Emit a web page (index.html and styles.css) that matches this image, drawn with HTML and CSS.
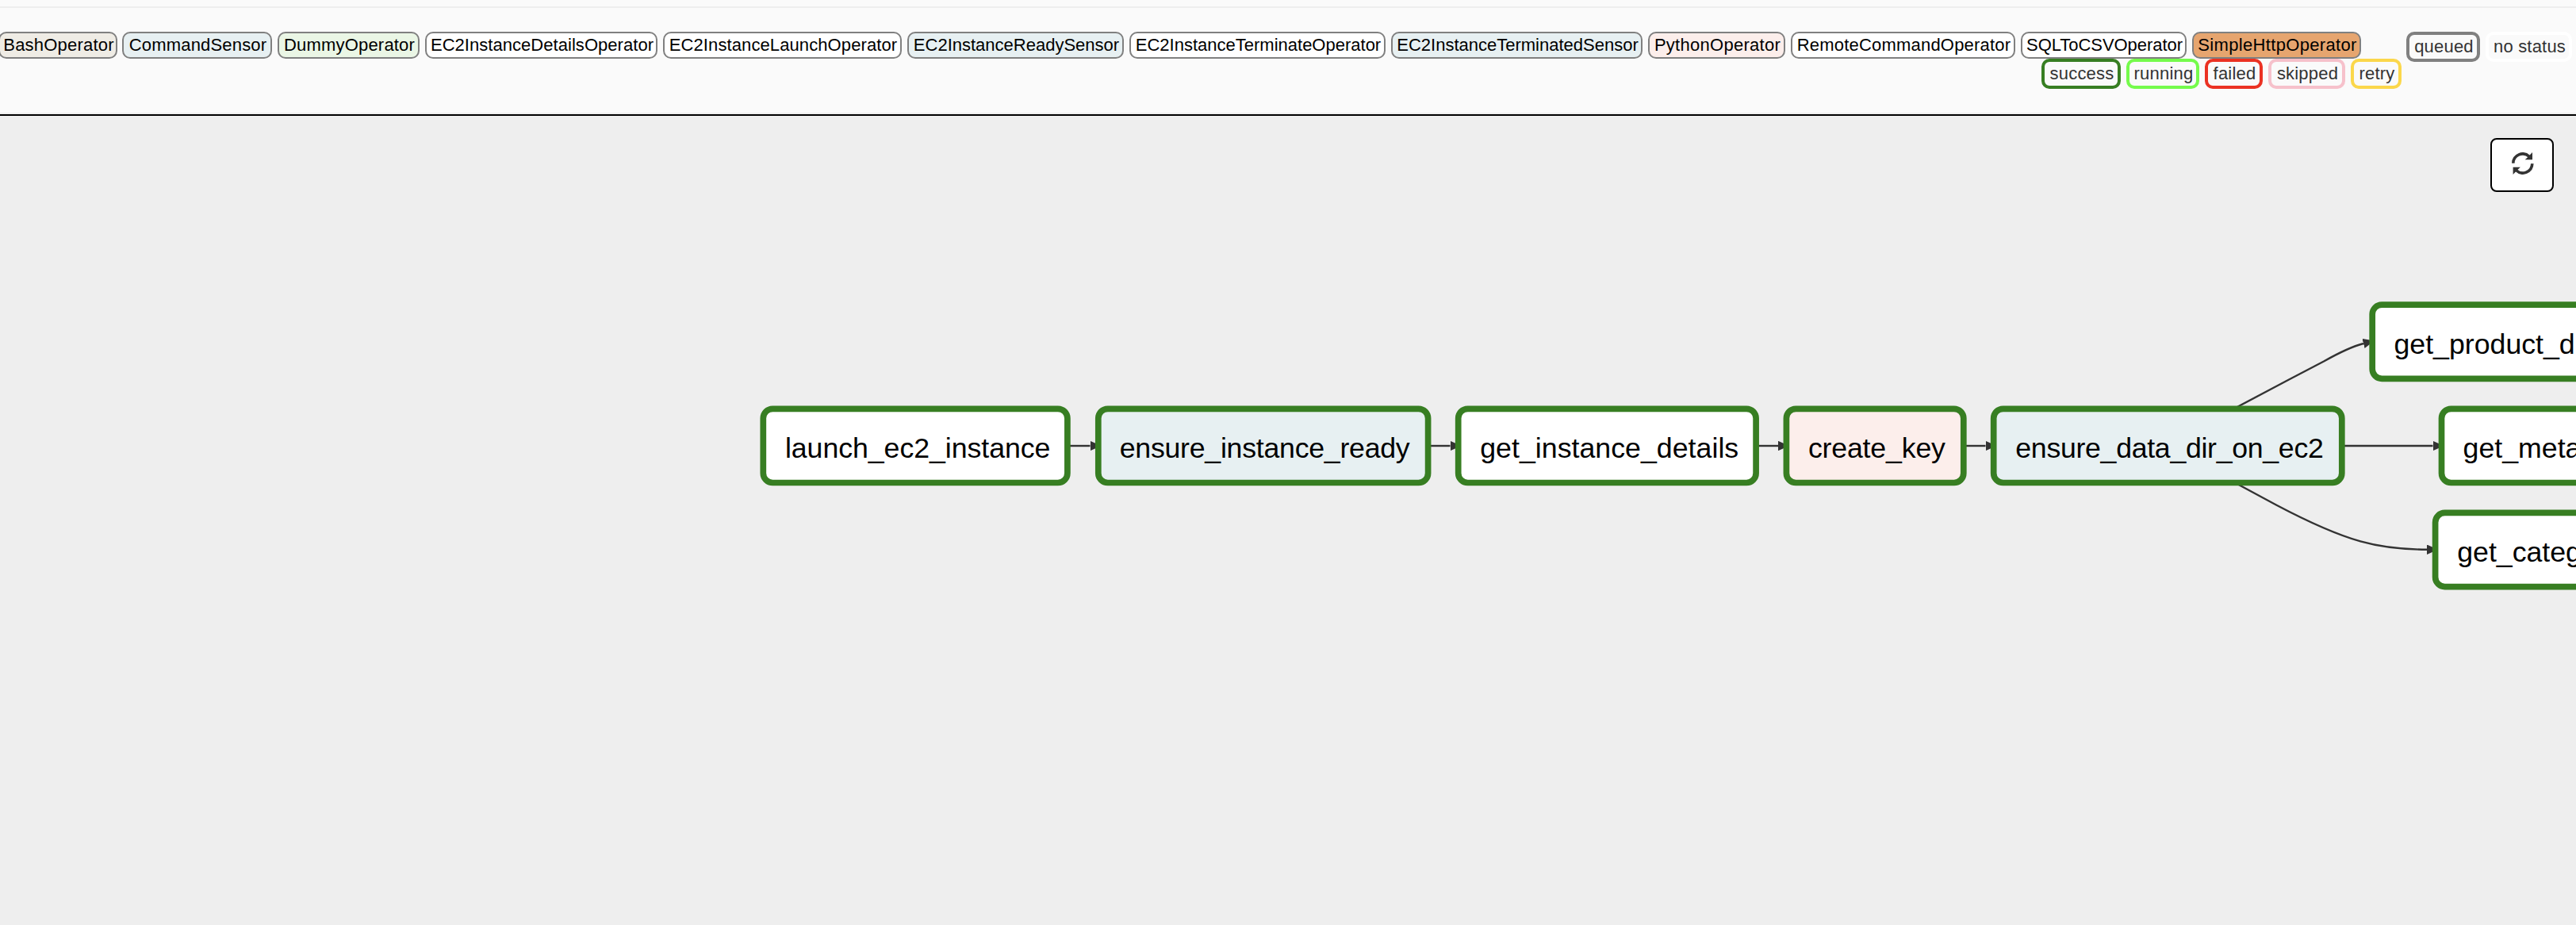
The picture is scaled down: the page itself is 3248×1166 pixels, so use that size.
FILE: index.html
```html
<!DOCTYPE html>
<html lang="en">
<head>
<meta charset="utf-8">
<title>DAG graph view</title>
<link rel="stylesheet" href="styles.css">
</head>
<body>
<header class="legend">
  <div class="legend-row">
    <span class="operator bash">BashOperator</span>
    <span class="operator command">CommandSensor</span>
    <span class="operator dummy">DummyOperator</span>
    <span class="operator details">EC2InstanceDetailsOperator</span>
    <span class="operator launch">EC2InstanceLaunchOperator</span>
    <span class="operator ready">EC2InstanceReadySensor</span>
    <span class="operator terminate">EC2InstanceTerminateOperator</span>
    <span class="operator terminated">EC2InstanceTerminatedSensor</span>
    <span class="operator python">PythonOperator</span>
    <span class="operator remote">RemoteCommandOperator</span>
    <span class="operator sql">SQLToCSVOperator</span>
    <span class="operator http">SimpleHttpOperator</span>
    <span class="state queued">queued</span>
    <span class="state no-status">no status</span>
  </div>
  <div class="legend-row states">
    <span class="state success">success</span>
    <span class="state running">running</span>
    <span class="state failed">failed</span>
    <span class="state skipped">skipped</span>
    <span class="state retry">retry</span>
  </div>
</header>
<main class="canvas">
  <svg class="graph" width="3248" height="1020" viewBox="0 146 3248 1020">
    <defs>
      <marker id="arrow" viewBox="0 0 14 12.4" refX="0" refY="6.2" markerWidth="14" markerHeight="12.4" markerUnits="userSpaceOnUse" orient="auto">
        <path d="M0 0L14 6.2L0 12.4Z" fill="#333"/>
      </marker>
    </defs>
    <g class="edges">
      <path d="M1345 562H1374.5"/>
      <path d="M1800 562H1828.5"/>
      <path d="M2214 562H2242"/>
      <path d="M2476 562H2503.5"/>
      <path d="M2952 562H3067.5"/>
      <path d="M2819 514L2886.5 478.3L2930 455.5Q2961 438 2980 433"/>
      <path d="M2819 609L2870 636.5C2960 684 3000 692.7 3060 692.7"/>
    </g>
    <g class="nodes">
      <rect class="plain" x="962.3" y="515.3" width="383.6" height="93.2" rx="12"/>
      <rect class="sensor" x="1384.8" y="515.3" width="415.8" height="93.2" rx="12"/>
      <rect class="plain" x="1838.7" y="515.3" width="375.4" height="93.2" rx="12"/>
      <rect class="key" x="2252.4" y="515.3" width="223.4" height="93.2" rx="12"/>
      <rect class="sensor" x="2513.7" y="515.3" width="439.1" height="93.2" rx="12"/>
      <rect class="plain" x="2991.2" y="384.1" width="420" height="93.2" rx="12"/>
      <rect class="plain" x="3078.5" y="515.3" width="330" height="93.2" rx="12"/>
      <rect class="plain" x="3070.6" y="646.4" width="340" height="93.2" rx="12"/>
    </g>
    <g class="labels">
      <text x="989.9" y="577" textLength="334.5">launch_ec2_instance</text>
      <text x="1411.7" y="577" textLength="366">ensure_instance_ready</text>
      <text x="1866.2" y="577" textLength="326">get_instance_details</text>
      <text x="2279.9" y="577" textLength="173">create_key</text>
      <text x="2541.3" y="577" textLength="388.5">ensure_data_dir_on_ec2</text>
      <text x="3018.5" y="446">get_product_d</text>
      <text x="3105.6" y="577">get_meta</text>
      <text x="3098.2" y="708">get_categ</text>
    </g>
  </svg>
  <button class="refresh" aria-label="Refresh">
    <svg width="28" height="28" viewBox="0 0 28 28">
      <g id="half">
        <path d="M1.8 13.7A12 12 0 0 1 22 5.2" fill="none" stroke="#333" stroke-width="3.6"/>
        <path d="M26 0V9.3H16.7L20 6.2Z" fill="#333"/>
      </g>
      <use href="#half" transform="rotate(180 13.8 14)"/>
    </svg>
  </button>
</main>
</body>
</html>
```
FILE: styles.css
```css
* { box-sizing: border-box; }

body {
  margin: 0;
  overflow: hidden;
  background: #eee;
  color: #333;
  font-family: "Liberation Sans", Arial, sans-serif;
}

.legend {
  height: 146px;
  padding-top: 40px;
  background: linear-gradient(#eee, #eee) 0 8px / 100% 2px no-repeat #fafafa;
  border-bottom: 2px solid #000;
  box-shadow: inset 0 -2px #eee;
}

.legend-row {
  display: flex;
  align-items: flex-start;
  gap: 7px;
  height: 34px;
  margin-left: -2px;
  font-size: 22px;
  line-height: 29px;
}

.legend-row.states { margin-left: 2574px; }

.operator, .state {
  flex: none;
  padding-left: 2px;
  border-radius: 10px;
  text-align: center;
  white-space: nowrap;
}

.operator {
  height: 34px;
  border: 2px solid #808080;
  background: #fff;
  color: #000;
}

.state {
  height: 38px;
  border: 4px solid #808080;
  letter-spacing: 0.2px;
}

.bash { width: 150px; margin-right: -1px; background: #efece5; letter-spacing: 0.2px; }
.command { width: 189px; background: #e7f0f2; letter-spacing: 0.18px; }
.dummy { width: 179px; background: #eaf6e5; letter-spacing: 0.2px; }
.details { width: 293px; letter-spacing: 0.04px; }
.launch { width: 301px; letter-spacing: 0.1px; }
.ready { width: 273px; background: #e7f0f2; }
.terminate { width: 323px; }
.terminated { width: 317px; background: #e7f0f2; }
.python { width: 173px; background: #fceeeb; letter-spacing: 0.28px; }
.remote { width: 283px; letter-spacing: 0.2px; }
.sql { width: 209px; letter-spacing: -0.05px; }
.http { width: 213px; background: #e6a56f; letter-spacing: 0.33px; }

.queued { width: 93px; margin-left: 50px; }
.no-status { width: 109px; border-color: #fff; }
.success { width: 100px; border-color: #377e22; }
.running { width: 92px; border-color: #75fb4c; }
.failed { width: 73px; border-color: #eb3223; }
.skipped { width: 97px; border-color: #f6c1cb; }
.retry { width: 64px; border-color: #fbd74b; }

.canvas { position: relative; }

.graph { display: block; }

.edges path {
  fill: none;
  stroke: #333;
  stroke-width: 2.4px;
  marker-end: url(#arrow);
}

.nodes rect {
  stroke: #377e22;
  stroke-width: 7.7px;
}

.nodes .plain { fill: #fff; }
.nodes .sensor { fill: #e7f0f2; }
.nodes .key { fill: #fceeeb; }

.labels text {
  fill: #000;
  font-size: 35.7px;
}

.refresh {
  position: absolute;
  top: 28px;
  right: 28px;
  width: 80px;
  height: 68px;
  padding: 16px 0 0 25px;
  border: 2px solid #000;
  border-radius: 8px;
  background: #fff;
  text-align: left;
}

.refresh svg { display: block; margin-bottom: 22px; }
```
